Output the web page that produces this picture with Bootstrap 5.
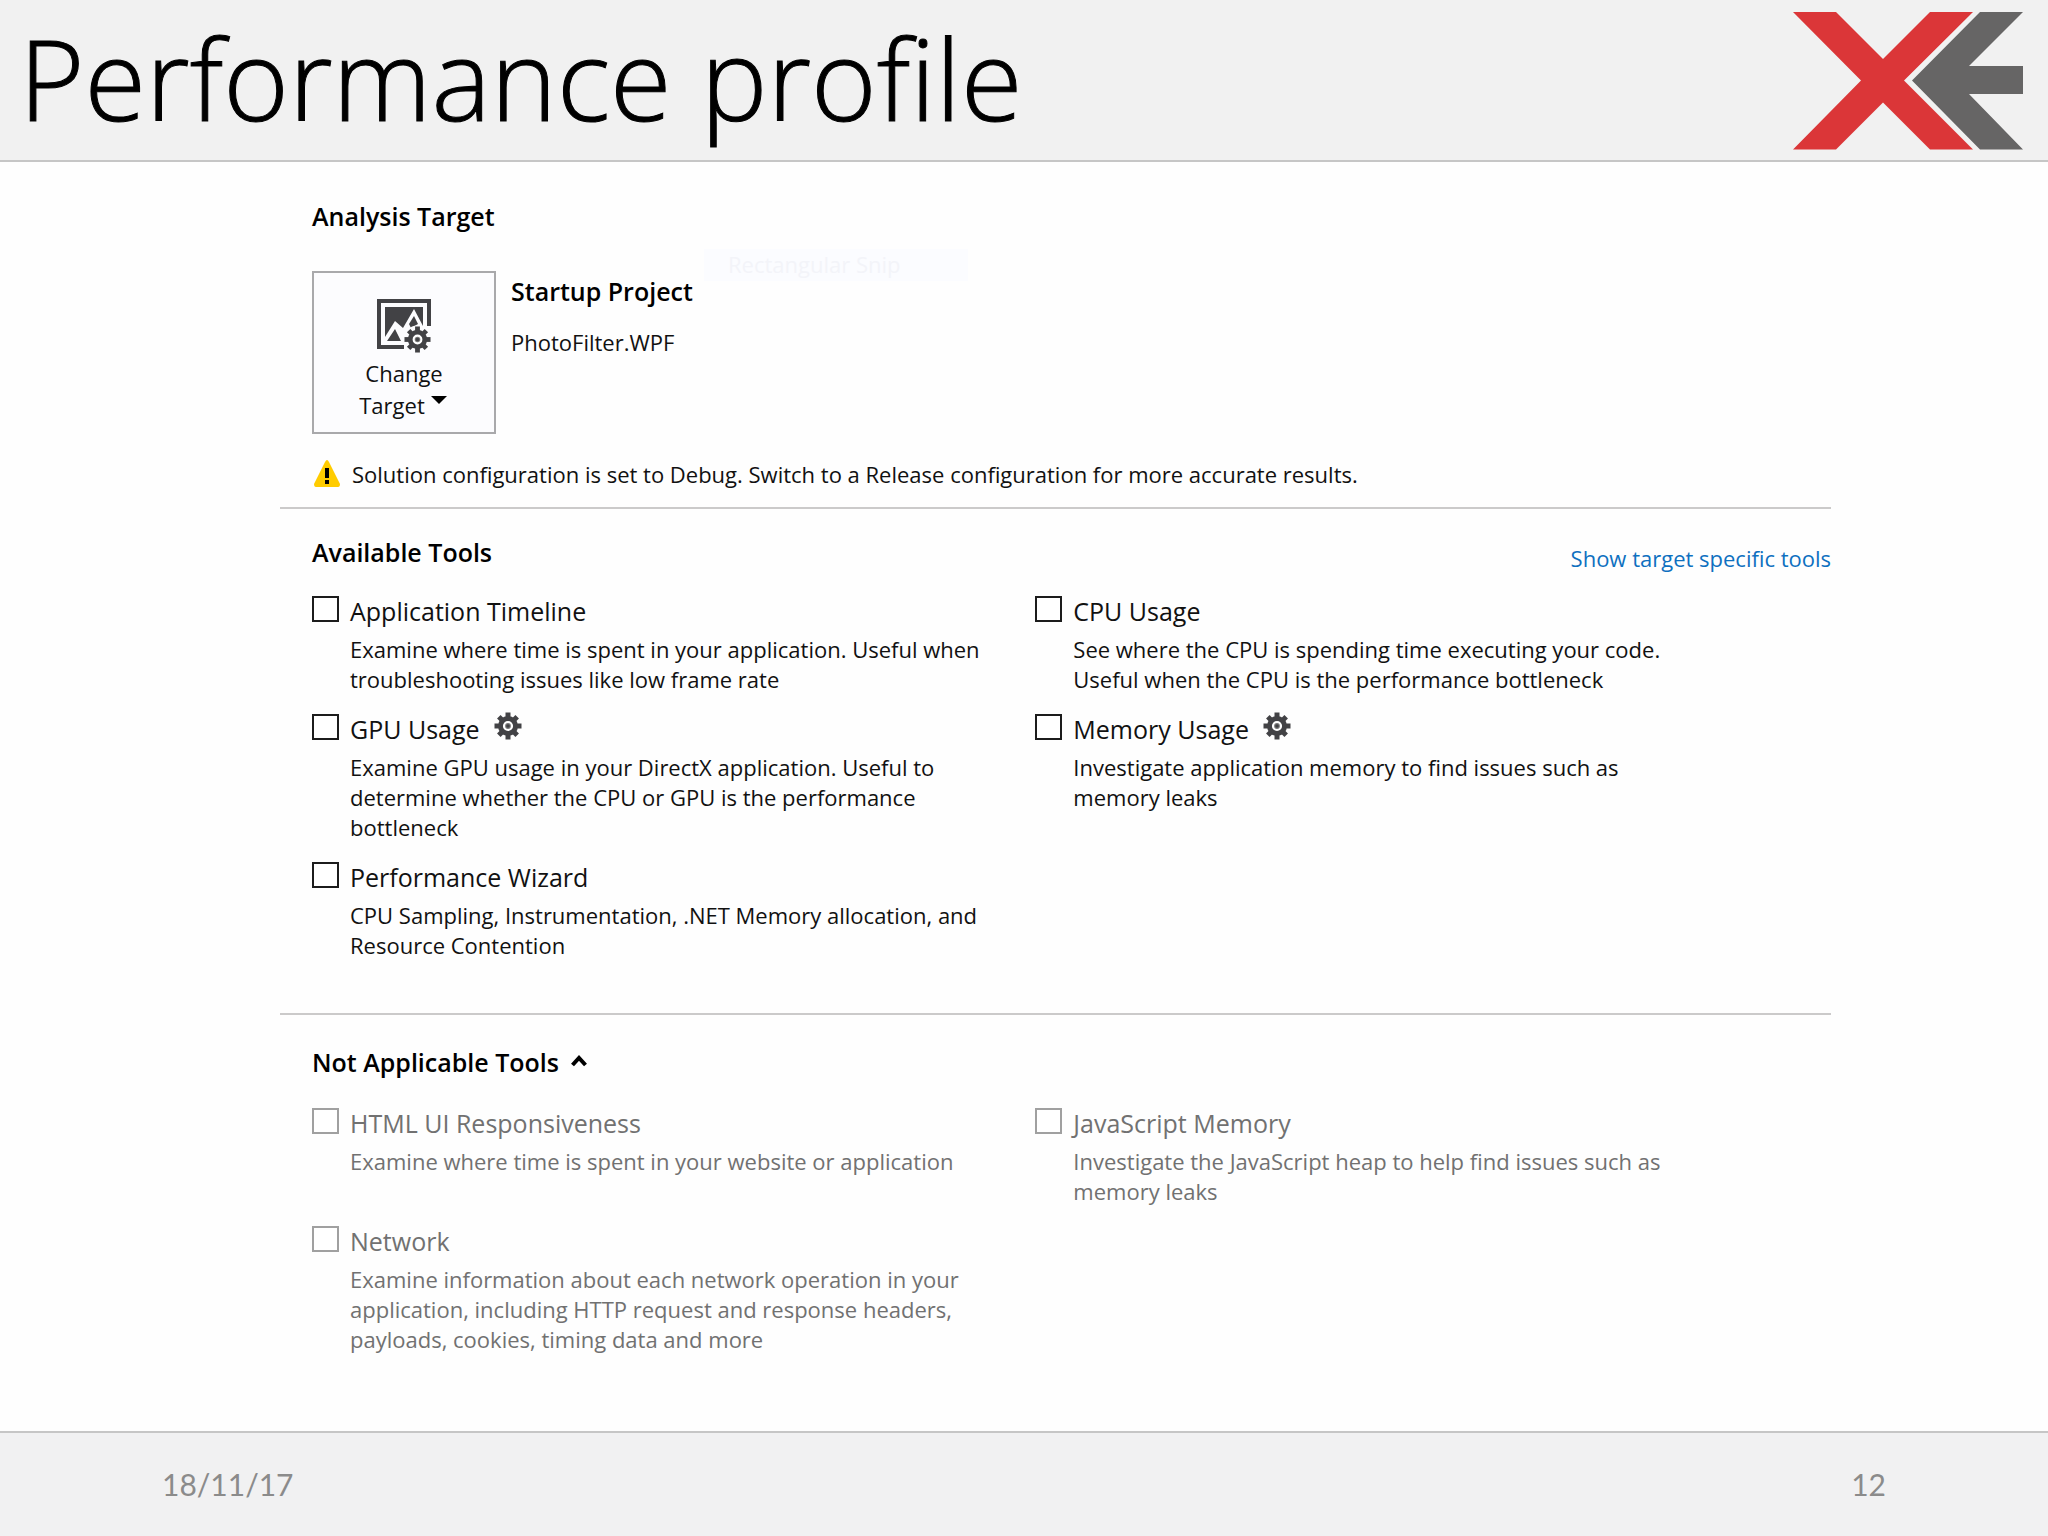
<!DOCTYPE html>
<html lang="en">
<head>
<meta charset="utf-8">
<meta name="viewport" content="width=device-width, initial-scale=1">
<title>Performance profile</title>
<link href="https://cdn.jsdelivr.net/npm/bootstrap@5.3.0/dist/css/bootstrap.min.css" rel="stylesheet">
<style>
  body { font-family: "Open Sans", "Noto Sans", sans-serif; font-size: 22px; line-height: 30px; color: #111; background: #fefefe; }
  .slide-head { height: 162px; background: #f1f1f1; border-bottom: 2px solid #c6c6c6; padding: 2px 24px 0 19px; }
  .slide-title { font-family: "Open Sans", sans-serif; font-weight: 300; font-size: 112px; line-height: 150px; padding-bottom: 6px; color: #000; font-variant-ligatures: none; -webkit-text-stroke: 1px #000; }
  .slide-foot { height: 105px; background: #f1f1f2; border-top: 2px solid #c6c6c6; padding: 0 162px 2px; font-family: Lato, sans-serif; font-size: 30px; color: #8b8b8b; }
  .profiler { padding: 36px 217px 0 280px; }
  .section-block { padding-left: 32px; }
  .section-title { font-size: 25px; line-height: 36px; font-weight: 600; color: #000; }
  .target-row { margin-top: 37px; }
  .target-btn { width: 184px; height: 163px; border: 2px solid #a9a9ab; background: #fcfcfe; color: #111; padding: 26px 0 0; line-height: 32px; }
  .target-btn svg { flex: none; }
  .target-info { padding: 2px 0 0 15px; }
  .target-name { margin-top: 18px; }
  .warn-row { margin-top: 25px; margin-bottom: 18px; gap: 11px; padding-left: 1px; }
  .divider { height: 2px; background: #cbcaca; }
  .avail { padding-top: 25px; padding-bottom: 38px; }
  .avail .tools-grid { margin-top: 18px; }
  .link-tools { color: #0e70c0; margin-top: 9px; }
  .notapp { padding-top: 29px; }
  .notapp .tools-grid { margin-top: 23px; }
  .tools-grid { display: grid; grid-template-columns: 10fr 11fr; }
  .tool-item { padding-bottom: 15px; }
  .tool-item input { appearance: none; width: 27px; height: 26px; border: 2px solid #1c1c1c; background: #fff; margin: 0 11px 4px 0; }
  .tool-name { font-size: 25px; line-height: 40px; }
  .tool-text { padding: 3px 0 0 38px; max-width: 678px; }
  .tools-grid > :nth-child(even) .tool-text { max-width: 648px; }
  .tool-item .gear-btn { margin: 0 0 6px 14px; color: #424245; }
  .is-off, .is-off .tool-name { color: #717171; }
  .is-off input { border-color: #a0a0a0; }
  .ghost-tip { top: -22px; left: 392px; width: 264px; height: 32px; padding-left: 24px; background: #fbfcff; color: #f3f4f9; }
</style>
<script src="https://cdn.jsdelivr.net/npm/bootstrap@5.3.0/dist/js/bootstrap.bundle.min.js"></script>
</head>
<body class="d-flex flex-column min-vh-100">
<svg class="d-none" aria-hidden="true">
  <symbol id="gear" viewBox="-14 -14 28 28">
    <g fill="currentColor">
      <rect x="-2.5" y="-13.5" width="5" height="27"/>
      <rect x="-13.5" y="-2.5" width="27" height="5"/>
      <rect x="-2.5" y="-13" width="5" height="26" transform="rotate(45)"/>
      <rect x="-2.5" y="-13" width="5" height="26" transform="rotate(-45)"/>
      <circle r="10"/>
    </g>
    <circle r="4" fill="#777" stroke="#fff" stroke-width="2.2"/>
    <circle r="1.8" fill="#424245"/>
  </symbol>
</svg>

<header class="slide-head d-flex justify-content-between align-items-center">
  <h1 class="slide-title m-0">Performance profile</h1>
  <svg width="231" height="138" viewBox="0 0 231 138" role="img" aria-label="XE">
    <path fill="#db3638" d="M0 0H43L90 47L137 0H180L111 68.500L180 137.500H137L90 90.500L43 137.500H0L68 68.500Z"/>
    <path fill="#666565" d="M187 0H230L176 54H230V82H176L230 137.500H187L119 68.500Z"/>
  </svg>
</header>

<main class="profiler flex-grow-1">
  <section class="section-block">
    <h2 class="section-title m-0">Analysis Target</h2>
    <div class="d-flex position-relative target-row">
      <button type="button" class="target-btn d-flex flex-column align-items-center">
        <svg class="mb-1" width="54" height="54" viewBox="0 0 54 54" aria-hidden="true">
          <path fill="#424245" d="M0 0H54V27H50V4H4V46H27V50H0Z"/>
          <path fill="#424245" d="M8 8H46V27L37 10L26 29L18 22L8 38Z"/>
          <path fill="#424245" d="M10 42L18 30L24 42ZM32 25L37 17L41 25L34 29Z"/>
          <circle cx="40.500" cy="40.500" r="14" fill="#fcfcfe"/>
          <use href="#gear" x="27" y="27" width="27" height="27" color="#424245"/>
        </svg>
        <span>Change</span>
        <span class="d-flex">Target
          <svg class="ms-1" width="20" height="20" viewBox="0 0 20 20" aria-hidden="true"><path d="M2 7H18L10 15Z" fill="#000"/></svg>
        </span>
      </button>
      <div class="target-info">
        <div class="section-title">Startup Project</div>
        <div class="target-name">PhotoFilter.WPF</div>
      </div>
      <div class="ghost-tip position-absolute" aria-hidden="true">Rectangular Snip</div>
    </div>
    <div class="warn-row d-flex align-items-center">
      <svg width="28" height="28" viewBox="0 0 28 28" aria-hidden="true">
        <path fill="#fc0" d="M14 0Q15 0 16 2L27 24Q27 27 25 27H3Q1 27 1 24L12 2Q13 0 14 0Z"/>
        <path d="M12 8H16V18H12ZM12 20H16V24H12Z"/>
      </svg>
      <span>Solution configuration is set to Debug. Switch to a Release configuration for more accurate results.</span>
    </div>
  </section>

  <div class="divider"></div>

  <section class="section-block avail">
    <div class="d-flex justify-content-between">
      <h2 class="section-title m-0">Available Tools</h2>
      <a href="#" class="link-tools text-decoration-none">Show target specific tools</a>
    </div>
    <div class="tools-grid">
      <div class="tool-item">
        <div class="d-flex align-items-center"><input type="checkbox" id="t1"><label class="tool-name" for="t1">Application Timeline</label></div>
        <div class="tool-text">Examine where time is spent in your application. Useful when troubleshooting issues like low frame rate</div>
      </div>
      <div class="tool-item">
        <div class="d-flex align-items-center"><input type="checkbox" id="t2"><label class="tool-name" for="t2">CPU Usage</label></div>
        <div class="tool-text">See where the CPU is spending time executing your code. Useful when the CPU is the performance bottleneck</div>
      </div>
      <div class="tool-item">
        <div class="d-flex align-items-center"><input type="checkbox" id="t3"><label class="tool-name" for="t3">GPU Usage</label>
          <button type="button" class="gear-btn btn p-0 border-0 d-flex" aria-label="GPU Usage settings"><svg width="28" height="28"><use href="#gear"/></svg></button></div>
        <div class="tool-text">Examine GPU usage in your DirectX application. Useful to determine whether the CPU or GPU is the performance bottleneck</div>
      </div>
      <div class="tool-item">
        <div class="d-flex align-items-center"><input type="checkbox" id="t4"><label class="tool-name" for="t4">Memory Usage</label>
          <button type="button" class="gear-btn btn p-0 border-0 d-flex" aria-label="Memory Usage settings"><svg width="28" height="28"><use href="#gear"/></svg></button></div>
        <div class="tool-text">Investigate application memory to find issues such as memory leaks</div>
      </div>
      <div class="tool-item">
        <div class="d-flex align-items-center"><input type="checkbox" id="t5"><label class="tool-name" for="t5">Performance Wizard</label></div>
        <div class="tool-text">CPU Sampling, Instrumentation, .NET Memory allocation, and Resource Contention</div>
      </div>
    </div>
  </section>

  <div class="divider"></div>

  <section class="section-block notapp">
    <h2 class="section-title m-0 d-flex align-items-center">Not Applicable Tools
      <svg class="ms-2" width="24" height="16" viewBox="0 0 24 16" aria-hidden="true"><path d="M5.500 11L12 4L18.500 11" fill="none" stroke="#000" stroke-width="4"/></svg>
    </h2>
    <div class="tools-grid is-off">
      <div class="tool-item">
        <div class="d-flex align-items-center"><input type="checkbox" id="n1" disabled><label class="tool-name" for="n1">HTML UI Responsiveness</label></div>
        <div class="tool-text">Examine where time is spent in your website or application</div>
      </div>
      <div class="tool-item">
        <div class="d-flex align-items-center"><input type="checkbox" id="n2" disabled><label class="tool-name" for="n2">JavaScript Memory</label></div>
        <div class="tool-text">Investigate the JavaScript heap to help find issues such as memory leaks</div>
      </div>
      <div class="tool-item">
        <div class="d-flex align-items-center"><input type="checkbox" id="n3" disabled><label class="tool-name" for="n3">Network</label></div>
        <div class="tool-text">Examine information about each network operation in your application, including HTTP request and response headers, payloads, cookies, timing data and more</div>
      </div>
    </div>
  </section>
</main>

<footer class="slide-foot d-flex justify-content-between align-items-center">
  <span>18/11/17</span>
  <span>12</span>
</footer>
</body>
</html>
